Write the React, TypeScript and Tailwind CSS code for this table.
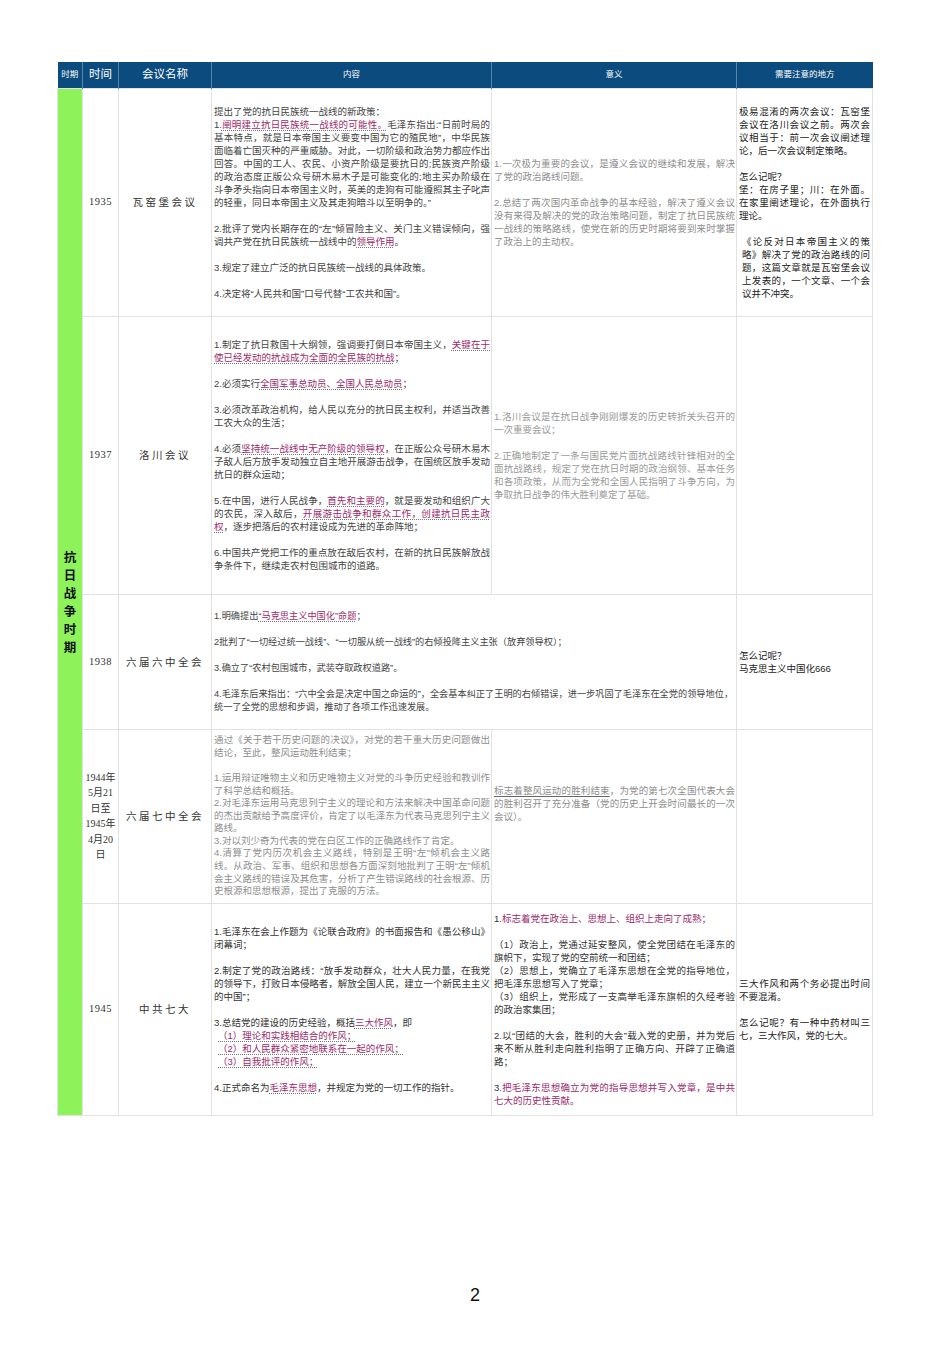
import React from "react";

const M = ({ children }: { children: React.ReactNode }) => (
  <span className="text-[#9a2b6c] underline decoration-dotted decoration-[#777] underline-offset-[2px]">
    {children}
  </span>
);
const Mp = ({ children }: { children: React.ReactNode }) => (
  <span className="text-[#9a2b6c]">{children}</span>
);

const td = "border border-[#e2e2e2] align-middle";
const txt = "pl-[2px] pr-[1px] text-[9.5px] leading-[13px] text-justify";
const ntxt = "px-[2px] text-[9.5px] leading-[13px] text-justify";

const Year = ({ children }: { children: React.ReactNode }) => (
  <td className={`${td} text-center text-[10.5px] text-[#333] tracking-[0.5px] [font-family:'Liberation_Serif','Noto_Sans_CJK_SC',serif]`}>
    {children}
  </td>
);
const Name = ({ children }: { children: React.ReactNode }) => (
  <td className={`${td} text-center text-[10.5px] text-[#333] tracking-[2.5px] [font-family:'Noto_Sans_CJK_SC',sans-serif]`}>{children}</td>
);

export default function App() {
  return (
    <div className="w-[950px] h-[1345px] bg-white [font-family:'Liberation_Sans','Noto_Sans_CJK_SC',sans-serif] pt-[62px] pl-[57px]">
      <table className="table-fixed border-collapse w-[815px]">
        <colgroup>
          <col className="w-[25px]" />
          <col className="w-[36px]" />
          <col className="w-[93px]" />
          <col className="w-[280px]" />
          <col className="w-[245px]" />
          <col className="w-[136px]" />
        </colgroup>
        <thead>
          <tr className="h-[26px] bg-[#0b4b7e] text-white">
            <th className="font-normal text-[8.5px] border-r border-[#5a84ab]">时期</th>
            <th className="font-normal text-[11.5px] border-r border-[#5a84ab]">时间</th>
            <th className="font-normal text-[11.5px] border-r border-[#5a84ab]">会议名称</th>
            <th className="font-normal text-[8.5px] border-r border-[#5a84ab]">内容</th>
            <th className="font-normal text-[8.5px] border-r border-[#5a84ab]">意义</th>
            <th className="font-normal text-[8.5px]">需要注意的地方</th>
          </tr>
        </thead>
        <tbody>
          <tr className="h-[228px]">
            <td rowSpan={5} className="bg-[#8ef25b] border border-[#e2e2e2] align-middle">
              <div className="flex flex-col items-center text-[12.5px] leading-[18px] font-bold text-[#111] [font-family:'Noto_Sans_CJK_SC',sans-serif]">
                <span>抗</span>
                <span>日</span>
                <span>战</span>
                <span>争</span>
                <span>时</span>
                <span>期</span>
              </div>
            </td>
            <Year>1935</Year>
            <Name>瓦窑堡会议</Name>
            <td className={td}>
              <div className={`${txt} text-[#444] flex flex-col gap-[13px]`}>
                <p>
                  提出了党的抗日民族统一战线的新政策：
                  <br />
                  1.<M>阐明建立抗日民族统一战线的可能性。</M>毛泽东指出:“日前时局的基本特点，就是日本帝国主义要变中国为它的殖民地”，中华民族面临着亡国灭种的严重威胁。对此，一切阶级和政治势力都应作出回答。中国的工人、农民、小资产阶级是要抗日的;民族资产阶级的政治态度正版公众号研木易木子是可能变化的;地主买办阶级在斗争矛头指向日本帝国主义时，英美的走狗有可能遵照其主子叱声的轻重，同日本帝国主义及其走狗暗斗以至明争的。”
                </p>
                <p>
                  2.批评了党内长期存在的“左”倾冒险主义、关门主义错误倾向，强调共产党在抗日民族统一战线中的<M>领导作用</M>。
                </p>
                <p>3.规定了建立广泛的抗日民族统一战线的具体政策。</p>
                <p>4.决定将“人民共和国”口号代替“工农共和国”。</p>
              </div>
            </td>
            <td className={td}>
              <div className={`${txt} text-[#8e8e8e] flex flex-col gap-[13px]`}>
                <p>1.一次极为重要的会议，是遵义会议的继续和发展，解决了党的政治路线问题。</p>
                <p>
                  2.总结了两次国内革命战争的基本经验，解决了遵义会议没有来得及解决的党的政治策略问题，制定了抗日民族统一战线的策略路线，使党在新的历史时期将要到来时掌握了政治上的主动权。
                </p>
              </div>
            </td>
            <td className={td}>
              <div className={`${ntxt} text-[#222] flex flex-col gap-[13px]`}>
                <p>极易混淆的两次会议：瓦窑堡会议在洛川会议之前。两次会议相当于：前一次会议阐述理论，后一次会议制定策略。</p>
                <p>
                  怎么记呢？
                  <br />
                  堡：在房子里；川：在外面。在家里阐述理论，在外面执行理论。
                </p>
                <p className="pl-[3px]">《论反对日本帝国主义的策略》解决了党的政治路线的问题，这篇文章就是瓦窑堡会议上发表的，一个文章、一个会议并不冲突。</p>
              </div>
            </td>
          </tr>

          <tr className="h-[278px]">
            <Year>1937</Year>
            <Name>洛川会议</Name>
            <td className={td}>
              <div className={`${txt} text-[#444] flex flex-col gap-[13px]`}>
                <p>
                  1.制定了抗日救国十大纲领，强调要打倒日本帝国主义，<M>关键在于使已经发动的抗战成为全面的全民族的抗战</M>；
                </p>
                <p>
                  2.必须实行<M>全国军事总动员、全国人民总动员</M>；
                </p>
                <p>3.必须改革政治机构，给人民以充分的抗日民主权利，并适当改善工农大众的生活；</p>
                <p>
                  4.必须<M>坚持统一战线中无产阶级的领导权</M>，在正版公众号研木易木子敌人后方放手发动独立自主地开展游击战争，在国统区放手发动抗日的群众运动；
                </p>
                <p>
                  5.在中国，进行人民战争，<M>首先和主要的</M>，就是要发动和组织广大的农民，深入敌后，<M>开展游击战争和群众工作，创建抗日民主政权</M>，逐步把落后的农村建设成为先进的革命阵地；
                </p>
                <p>6.中国共产党把工作的重点放在敌后农村，在新的抗日民族解放战争条件下，继续走农村包围城市的道路。</p>
              </div>
            </td>
            <td className={td}>
              <div className={`${txt} text-[#9a9a9a] flex flex-col gap-[13px]`}>
                <p>1.洛川会议是在抗日战争刚刚爆发的历史转折关头召开的一次重要会议；</p>
                <p>
                  2.正确地制定了一条与国民党片面抗战路线针锋相对的全面抗战路线，规定了党在抗日时期的政治纲领、基本任务和各项政策，从而为全党和全国人民指明了斗争方向，为争取抗日战争的伟大胜利奠定了基础。
                </p>
              </div>
            </td>
            <td className={td}></td>
          </tr>

          <tr className="h-[135px]">
            <Year>1938</Year>
            <Name>六届六中全会</Name>
            <td className={td} colSpan={2}>
              <div className="pl-[2px] pr-[1px] text-[9.2px] leading-[13px] text-[#444] flex flex-col gap-[13px]">
                <p>
                  1.明确提出<M>“马克思主义中国化”命题</M>；
                </p>
                <p>2批判了“一切经过统一战线”、“一切服从统一战线”的右倾投降主义主张（放弃领导权）；</p>
                <p>3.确立了“农村包围城市，武装夺取政权道路”。</p>
                <p>
                  4.毛泽东后来指出：“六中全会是决定中国之命运的”，全会基本纠正了王明的右倾错误，进一步巩固了毛泽东在全党的领导地位，
                  <br />
                  统一了全党的思想和步调，推动了各项工作迅速发展。
                </p>
              </div>
            </td>
            <td className={td}>
              <div className={`${ntxt} text-[#222]`}>
                怎么记呢？
                <br />
                马克思主义中国化666
              </div>
            </td>
          </tr>

          <tr className="h-[174px]">
            <td className={`${td} text-center text-[10px] leading-[15.5px] text-[#333] [font-family:'Liberation_Serif','Noto_Sans_CJK_SC',serif]`}>
              1944年
              <br />
              5月21
              <br />
              日至
              <br />
              1945年
              <br />
              4月20
              <br />
              日
            </td>
            <Name>六届七中全会</Name>
            <td className={td}>
              <div className={`pl-[2px] pr-[1px] text-[9.5px] leading-[12.6px] text-justify text-[#8e8e8e] flex flex-col gap-[12.6px]`}>
                <p>通过《关于若干历史问题的决议》，对党的若干重大历史问题做出结论，至此，整风运动胜利结束；</p>
                <p>
                  1.运用辩证唯物主义和历史唯物主义对党的斗争历史经验和教训作了科学总结和概括。
                  <br />
                  2.对毛泽东运用马克思列宁主义的理论和方法来解决中国革命问题的杰出贡献给予高度评价，肯定了以毛泽东为代表马克思列宁主义路线。
                  <br />
                  3.对以刘少奇为代表的党在白区工作的正确路线作了肯定。
                  <br />
                  4.清算了党内历次机会主义路线，特别是王明“左”倾机会主义路线。从政治、军事、组织和思想各方面深刻地批判了王明“左”倾机会主义路线的错误及其危害，分析了产生错误路线的社会根源、历史根源和思想根源，提出了克服的方法。
                </p>
              </div>
            </td>
            <td className={td}>
              <div className={`${txt} text-[#8e8e8e] pb-[26px]`}>
                <span className="underline decoration-[#666] underline-offset-[2px]">标志着整风运动的胜利结束</span>
                ，为党的第七次全国代表大会的胜利召开了充分准备（党的历史上开会时间最长的一次会议）。
              </div>
            </td>
            <td className={td}></td>
          </tr>

          <tr className="h-[212px]">
            <Year>1945</Year>
            <Name>中共七大</Name>
            <td className={td}>
              <div className={`${txt} text-[#333] flex flex-col gap-[13px]`}>
                <p>1.毛泽东在会上作题为《论联合政府》的书面报告和《愚公移山》闭幕词；</p>
                <p>2.制定了党的政治路线：“放手发动群众，壮大人民力量，在我党的领导下，打败日本侵略者，解放全国人民，建立一个新民主主义的中国”；</p>
                <p>
                  3.总结党的建设的历史经验，概括<M>三大作风</M>，即
                  <br />
                  <span className="pl-[4px]">
                    <M>（1）理论和实践相结合的作风；</M>
                  </span>
                  <br />
                  <span className="pl-[4px]">
                    <M>（2）和人民群众紧密地联系在一起的作风；</M>
                  </span>
                  <br />
                  <span className="pl-[4px]">
                    <M>（3）自我批评的作风；</M>
                  </span>
                </p>
                <p>
                  4.正式命名为<M>毛泽东思想</M>，并规定为党的一切工作的指针。
                </p>
              </div>
            </td>
            <td className={td}>
              <div className={`${txt} text-[#333] flex flex-col gap-[13px]`}>
                <p>
                  1.<Mp>标志着党在政治上、思想上、组织上走向了成熟；</Mp>
                </p>
                <p>
                  （1）政治上，党通过延安整风，使全党团结在毛泽东的旗帜下，实现了党的空前统一和团结；
                  <br />
                  （2）思想上，党确立了毛泽东思想在全党的指导地位，把毛泽东思想写入了党章；
                  <br />
                  （3）组织上，党形成了一支高举毛泽东旗帜的久经考验的政治家集团；
                </p>
                <p>2.以“团结的大会，胜利的大会”载入党的史册，并为党后来不断从胜利走向胜利指明了正确方向、开辟了正确道路；</p>
                <p>
                  3.<Mp>把毛泽东思想确立为党的指导思想并写入党章，是中共七大的历史性贡献。</Mp>
                </p>
              </div>
            </td>
            <td className={td}>
              <div className={`${ntxt} text-[#222] flex flex-col gap-[13px]`}>
                <p>三大作风和两个务必提出时间不要混淆。</p>
                <p>怎么记呢？有一种中药材叫三七，三大作风，党的七大。</p>
              </div>
            </td>
          </tr>
        </tbody>
      </table>
      <div className="w-[836px] text-center mt-[166px] text-[18px] text-[#111] [font-family:'Liberation_Sans',sans-serif]">
        2
      </div>
    </div>
  );
}
